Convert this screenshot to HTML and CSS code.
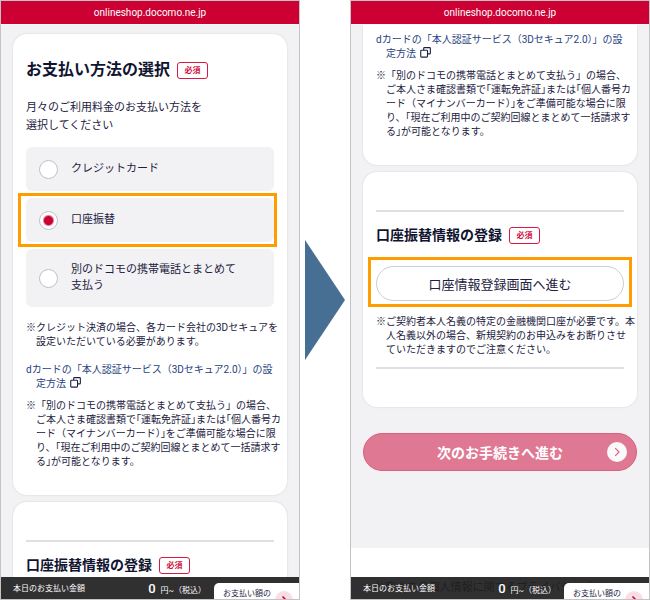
FILE: index.html
```html
<!DOCTYPE html>
<html lang="ja">

<head>
    <meta charset="UTF-8">
    <meta name="viewport" content="width=device-width, initial-scale=1.0">
    <title>お支払い方法の選択</title>
    <link rel="stylesheet" href="styles.css">
</head>

<body>
    <main class="steps">

        <!-- Step 1: payment method -->
        <section class="phone">
            <header class="url-bar">onlineshop.docomo.ne.jp</header>
            <div class="screen">
                <div class="card">
                    <h2 class="title title-large">お支払い方法の選択<span class="tag">必須</span></h2>
                    <p class="lead">月々のご利用料金のお支払い方法を<br>選択してください</p>

                    <div class="options">
                        <label class="option" for="pay-card">
                            <input type="radio" name="payment" id="pay-card">
                            <span>クレジットカード</span>
                        </label>
                        <label class="option highlight" for="pay-bank">
                            <input type="radio" name="payment" id="pay-bank" checked>
                            <span>口座振替</span>
                        </label>
                        <label class="option option-tall" for="pay-family">
                            <input type="radio" name="payment" id="pay-family">
                            <span>別のドコモの携帯電話とまとめて<br>支払う</span>
                        </label>
                    </div>

                    <p class="note">※クレジット決済の場合、各カード会社の3Dセキュアを<br>設定いただいている必要があります。</p>
                    <p class="note note-link">
                        <a href="#">dカードの「本人認証サービス（3Dセキュア2.0）」の設<br>定方法</a>
                        <svg class="window-icon" viewBox="0 0 12 12" aria-hidden="true">
                            <path d="M4 3.4V1.5a.8.8 0 0 1 .8-.8h5.7a.8.8 0 0 1 .8.8v5.2a.8.8 0 0 1-.8.8H8.4" />
                            <rect x=".8" y="3.6" width="7.4" height="7.4" rx=".8" />
                        </svg>
                    </p>
                    <p class="note note-last">※「別のドコモの携帯電話とまとめて支払う」の場合、<br>ご本人さま確認書類で｢運転免許証｣または｢個人番号カ<br>ード（マイナンバーカード）｣をご準備可能な場合に限<br>り、｢現在ご利用中のご契約回線とまとめて一括請求す<br>る｣が可能となります。</p>
                </div>

                <div class="card card-register">
                    <hr>
                    <h2 class="title">口座振替情報の登録<span class="tag">必須</span></h2>
                </div>
            </div>

            <footer class="total-bar">
                <span class="total-label">本日のお支払い金額</span>
                <span class="total-price"><b>0</b>円~（税込）</span>
                <button type="button" class="detail-button">
                    お支払い額の
                    <svg viewBox="0 0 18 18" aria-hidden="true">
                        <circle cx="9" cy="9" r="9" />
                        <path d="M7.5 5.5L11 9l-3.5 3.5" />
                    </svg>
                </button>
            </footer>
        </section>

        <svg class="arrow" viewBox="0 0 40 120" aria-hidden="true">
            <path d="M0 0L40 60L0 120Z" />
        </svg>

        <!-- Step 2: bank account registration -->
        <section class="phone">
            <header class="url-bar">onlineshop.docomo.ne.jp</header>
            <div class="screen screen-scrolled">
                <div class="card card-scrolled">
                    <p class="note">
                        <a href="#">dカードの「本人認証サービス（3Dセキュア2.0）」の設<br>定方法</a>
                        <svg class="window-icon" viewBox="0 0 12 12" aria-hidden="true">
                            <path d="M4 3.4V1.5a.8.8 0 0 1 .8-.8h5.7a.8.8 0 0 1 .8.8v5.2a.8.8 0 0 1-.8.8H8.4" />
                            <rect x=".8" y="3.6" width="7.4" height="7.4" rx=".8" />
                        </svg>
                    </p>
                    <p class="note note-last">※「別のドコモの携帯電話とまとめて支払う」の場合、<br>ご本人さま確認書類で｢運転免許証｣または｢個人番号カ<br>ード（マイナンバーカード）｣をご準備可能な場合に限<br>り、｢現在ご利用中のご契約回線とまとめて一括請求す<br>る｣が可能となります。</p>
                </div>

                <div class="card card-register">
                    <hr>
                    <h2 class="title">口座振替情報の登録<span class="tag">必須</span></h2>
                    <div class="register highlight">
                        <button type="button" class="register-button">口座情報登録画面へ進む</button>
                    </div>
                    <p class="note">※ご契約者本人名義の特定の金融機関口座が必要です。本<br>人名義以外の場合、新規契約のお申込みをお断りさせ<br>ていただきますのでご注意ください。</p>
                    <hr>
                </div>

                <button type="button" class="next-button">
                    次のお手続きへ進む
                    <svg viewBox="0 0 20 20" aria-hidden="true">
                        <circle cx="10" cy="10" r="10" />
                        <path d="M8.2 6.2L12 10l-3.8 3.8" />
                    </svg>
                </button>

                <div class="privacy">お客さまの個人情報に関するプライバシーポリシー</div>
            </div>

            <footer class="total-bar">
                <span class="total-label">本日のお支払い金額</span>
                <span class="total-price"><b>0</b>円~（税込）</span>
                <button type="button" class="detail-button">
                    お支払い額の
                    <svg viewBox="0 0 18 18" aria-hidden="true">
                        <circle cx="9" cy="9" r="9" />
                        <path d="M7.5 5.5L11 9l-3.5 3.5" />
                    </svg>
                </button>
            </footer>
        </section>

    </main>
</body>

</html>
```

FILE: styles.css
```css
* {
    box-sizing: border-box;
}

body {
    margin: 0;
    background: white;
    color: #1c2140;
    font-family: Roboto, "Noto Sans CJK JP", sans-serif;
    font-size: 11px;
}

h2,
p {
    margin: 0;
}

button {
    font-family: inherit;
    cursor: pointer;
}

.steps {
    display: flex;
    align-items: center;
    gap: 5px;
    height: 100vh;
}

.arrow {
    flex: none;
    width: 40px;
    height: 120px;
    fill: #466f93;
}

/* Phone frame */
.phone {
    position: relative;
    flex: 1;
    display: flex;
    flex-direction: column;
    min-width: 0;
    height: 100%;
    border: 1px solid #c4c4c6;
    overflow: hidden;
}

.url-bar {
    flex: none;
    height: 24px;
    border-bottom: 1px solid #fafafa;
    background: #cc0033;
    color: white;
    font-size: 10px;
    line-height: 23px;
    text-align: center;
}

.screen {
    flex: 1;
    display: flex;
    flex-direction: column;
    gap: 7px;
    min-height: 0;
    padding: 9px 12px 0;
    background: #f2f2f4;
    overflow: hidden;
}

.screen-scrolled {
    padding-top: 0;
}

/* Cards */
.card {
    flex: none;
    padding: 24px 13px 26px;
    border-radius: 14px;
    background: white;
    box-shadow: 0 0 2px rgba(0, 0, 0, 0.15);
}

.card-scrolled {
    padding-top: 8px;
    border-radius: 0 0 14px 14px;
}

.card-register {
    padding: 38px 13px;
}

hr {
    height: 2px;
    margin: 0;
    border: none;
    background: #dfe0e4;
}

.title {
    display: flex;
    align-items: center;
    gap: 7px;
    color: #10142f;
    font-size: 14px;
    font-weight: 700;
    line-height: 24px;
}

.title-large {
    font-size: 16px;
}

.card-register .title {
    margin-top: 11px;
}

.tag {
    width: 31px;
    border: 1px solid #d7194a;
    border-radius: 3px;
    color: #d0103f;
    font-size: 8px;
    font-weight: 700;
    line-height: 15px;
    text-align: center;
}

.lead {
    margin-top: 17px;
    line-height: 18px;
}

/* Payment options */
.options {
    display: flex;
    flex-direction: column;
    gap: 7px;
    margin: 12px 0 14px;
}

.option {
    display: flex;
    align-items: center;
    gap: 13px;
    min-height: 44px;
    padding: 0 13px;
    border-radius: 6px;
    background: #f2f2f4;
    line-height: 16px;
    cursor: pointer;
}

.option-tall {
    min-height: 58px;
}

.option input {
    appearance: none;
    flex: none;
    width: 19px;
    height: 19px;
    margin: 0;
    border: 1px solid #bfc0c9;
    border-radius: 50%;
    background: white;
}

.option input:checked {
    background: radial-gradient(circle, #cc0033 4px, white 6px);
}

.highlight {
    position: relative;
}

.highlight::after {
    content: "";
    position: absolute;
    inset: -5px -3px -5px -8px;
    border: 3px solid #ff9c00;
    pointer-events: none;
}

.note {
    padding-left: 10px;
    font-size: 10px;
    line-height: 14px;
    text-indent: -10px;
    white-space: nowrap;
}

.note-link {
    margin-top: 14px;
}

.note-last {
    margin-top: 8px;
}

.note a {
    color: #1f4280;
    text-decoration: none;
}

.window-icon {
    width: 11px;
    height: 11px;
    margin-left: 2px;
    fill: none;
    stroke: #1c2140;
    stroke-width: 1.2;
    vertical-align: -1px;
}

/* Bank account registration */
.register {
    margin: 19px 0 14px;
}

.register::after {
    inset: -9px -8px -6px;
}

.register-button {
    display: block;
    width: 100%;
    height: 35px;
    border: 1px solid #cdced5;
    border-radius: 18px;
    background: white;
    color: #1c2140;
    font-size: 13px;
}

.card-register .note {
    margin-bottom: 10px;
}

.next-button {
    position: relative;
    flex: none;
    height: 38px;
    margin-top: 19px;
    border: 1px solid #db5f80;
    border-radius: 19px;
    background: #df7893;
    color: white;
    font-size: 14px;
    font-weight: 700;
}

.next-button svg {
    position: absolute;
    top: 8px;
    right: 9px;
    width: 20px;
    height: 20px;
    fill: #fafafa;
}

.next-button path {
    fill: none;
    stroke: #df5f80;
    stroke-width: 1.2;
}

.privacy {
    flex: 1;
    margin: 70px -12px 0;
    padding-top: 32px;
    background: white;
    line-height: 16px;
    text-align: center;
}

/* Total bar, lies over the bottom of the screen */
.total-bar {
    position: absolute;
    right: 0;
    bottom: 0;
    left: 0;
    display: flex;
    align-items: flex-start;
    height: 22px;
    padding-left: 12px;
    background: rgba(30, 30, 30, 0.92);
    color: white;
    font-size: 8px;
    line-height: 24px;
    overflow: hidden;
}

.total-price {
    flex: 1;
    padding-right: 8px;
    text-align: right;
    white-space: nowrap;
}

.total-price b {
    margin-right: 5px;
    font-size: 13px;
    font-weight: 500;
}

.detail-button {
    display: flex;
    align-items: flex-start;
    gap: 4px;
    width: 85px;
    height: 40px;
    margin-top: 6px;
    padding: 0 0 0 9px;
    border: none;
    border-radius: 5px 0 0 0;
    background: white;
    color: #1c2140;
    font-size: 8px;
    line-height: 22px;
    white-space: nowrap;
}

.detail-button svg {
    flex: none;
    width: 18px;
    height: 18px;
    margin-top: 8px;
    fill: #fbdde4;
}

.detail-button path {
    fill: none;
    stroke: #cc0033;
    stroke-width: 1.5;
}
```
